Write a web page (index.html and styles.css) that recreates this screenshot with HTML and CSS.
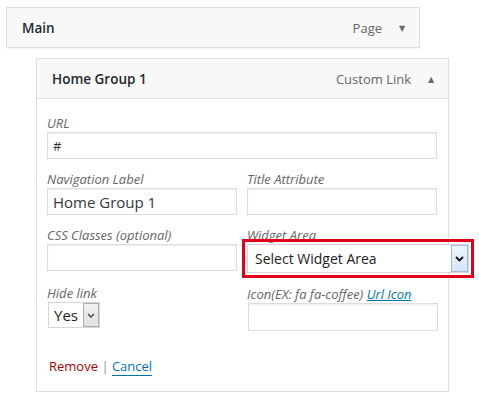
FILE: index.html
```html
<!DOCTYPE html>
<html>
<head>
<meta charset="utf-8">
<link rel="stylesheet" href="styles.css">
</head>
<body>
<div class="menu">
  <div class="item-bar main-bar">
    <span class="item-title">Main</span>
    <span class="item-type">Page</span>
    <span class="toggle">&#9660;</span>
  </div>
  <div class="sub-item">
    <div class="item-bar sub-bar">
      <span class="item-title">Home Group 1</span>
      <span class="item-type">Custom Link</span>
      <span class="toggle">&#9650;</span>
    </div>
    <div class="settings">
      <div class="fields">
        <div class="field wide">
          <label class="lbl">URL</label>
          <input class="txt" type="text" value="#">
        </div>
        <div class="field">
          <label class="lbl">Navigation Label</label>
          <input class="txt big" type="text" value="Home Group 1">
        </div>
        <div class="field">
          <label class="lbl">Title Attribute</label>
          <input class="txt" type="text" value="">
        </div>
        <div class="field">
          <label class="lbl">CSS Classes (optional)</label>
          <input class="txt" type="text" value="">
        </div>
        <div class="field">
          <label class="lbl">Widget Area</label>
          <div class="sel widget-sel">
            <span class="sel-text">Select Widget Area</span>
            <span class="sel-btn blue"><svg width="9" height="6" viewBox="0 0 9 6"><path d="M1 1 L4.5 4.5 L8 1" fill="none" stroke="#111" stroke-width="1.8"/></svg></span>
          </div>
        </div>
        <div class="field">
          <label class="lbl">Hide link</label>
          <div class="sel yes-sel">
            <span class="sel-text">Yes</span>
            <span class="sel-btn grey"><svg width="8" height="5" viewBox="0 0 8 5"><path d="M1 1 L4 4 L7 1" fill="none" stroke="#444" stroke-width="1.4"/></svg></span>
          </div>
        </div>
        <div class="field icon-field">
          <label class="lbl">Icon(EX: fa fa-coffee) <a class="url-icon" href="#">Url Icon</a></label>
          <input class="txt" type="text" value="">
        </div>
      </div>
      <div class="actions">
        <a class="remove" href="#">Remove</a>
        <span class="sep">|</span>
        <a class="cancel" href="#">Cancel</a>
      </div>
    </div>
  </div>
</div>
</body>
</html>
```
FILE: styles.css
```css
html, body {
  margin: 0;
  padding: 0;
  background: #fff;
}
body {
  font-family: "Open Sans", "DejaVu Sans", sans-serif;
  color: #23282d;
}
.menu {
  padding: 7px 0 0 6px;
}
.item-bar {
  box-sizing: border-box;
  height: 41px;
  border: 1px solid #dfdfdf;
  background: #f8f8f8;
  display: flex;
  align-items: center;
  padding: 0 13px 0 15px;
  box-shadow: 0 1px 1px rgba(0,0,0,0.04);
}
.main-bar {
  width: 414px;
}
.item-title {
  flex: 1;
  font-weight: 600;
  font-size: 13.5px;
  color: #23282d;
}
.item-type {
  font-size: 13px;
  color: #666;
  margin-right: 16px;
}
.toggle {
  font-size: 8px;
  color: #6b6b6b;
  width: 8px;
  text-align: center;
}
.sub-item {
  margin: 10px 0 0 30px;
  width: 413px;
}
.sub-bar {
  width: 413px;
}
.settings {
  box-sizing: border-box;
  width: 413px;
  border: 1px solid #dfdfdf;
  border-top: none;
  background: #fff;
  padding: 15px 11px 16px 10px;
  box-shadow: 0 1px 1px rgba(0,0,0,0.04);
}
.fields {
  display: grid;
  grid-template-columns: 190px 190px;
  column-gap: 10px;
  row-gap: 11px;
}
.field.wide {
  grid-column: 1 / -1;
}
.lbl {
  display: block;
  font-size: 13px;
  line-height: 18px;
  font-style: italic;
  color: #666;
  white-space: nowrap;
}
.txt {
  box-sizing: border-box;
  display: block;
  width: 100%;
  height: 27px;
  margin: 0;
  border: 1px solid #ddd;
  box-shadow: inset 0 1px 2px rgba(0,0,0,0.07);
  background: #fff;
  padding: 0 5px;
  font-family: "Open Sans", sans-serif;
  font-size: 13px;
  color: #32373c;
  outline: none;
}
.txt.big {
  font-size: 15px;
}
.sel {
  box-sizing: border-box;
  display: flex;
  align-items: stretch;
  background: #fff;
  font-size: 15px;
  color: #222;
}
.sel-text {
  flex: 1;
  display: flex;
  align-items: center;
}
.widget-sel {
  width: 222px;
  height: 29px;
  border: 1px solid #d6d6d6;
  outline: 3px solid #e3001b;
  outline-offset: 2px;
  font-size: 14px;
}
.widget-sel .sel-text {
  padding-left: 7px;
}
.sel-btn {
  box-sizing: border-box;
  width: 17px;
  display: flex;
  align-items: center;
  justify-content: center;
}
.sel-btn.blue {
  border: 1px solid #a6bbd3;
  background: linear-gradient(#eef5fd, #d6e5f5);
}
.yes-sel {
  width: 52px;
  height: 26px;
  margin-left: 1px;
  border: 1px solid #d6d6d6;
}
.yes-sel .sel-text {
  padding-left: 5px;
}
.sel-btn.grey {
  width: 16px;
  border: 1px solid #acacac;
  background: linear-gradient(#f2f2f2, #e0e0e0);
}
.icon-field .lbl {
  padding-top: 1px;
}
.icon-field .txt {
  margin-left: 1px;
  height: 28px;
}
.url-icon {
  color: #0073aa;
  text-decoration: underline;
}
.actions {
  margin-top: 26px;
  font-size: 13px;
  line-height: 18px;
  padding-left: 2px;
}
.remove {
  color: #a00;
  text-decoration: none;
}
.sep {
  color: #8a9099;
  margin: 0;
}
.cancel {
  color: #0073aa;
  text-decoration: none;
  border-bottom: 1px solid #0073aa;
}
```
